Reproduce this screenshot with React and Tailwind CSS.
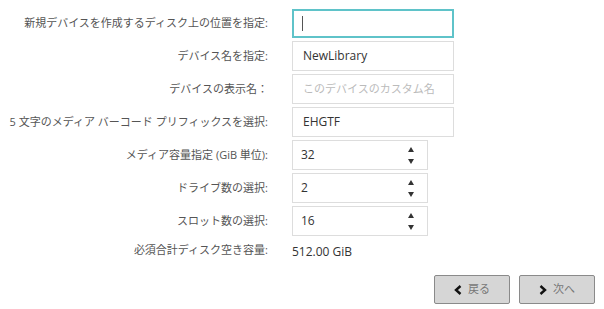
import { useState } from "react";

function Spinner() {
  return (
    <div className="flex flex-col items-center gap-[7px] mr-[13px]">
      <svg width="6" height="5" viewBox="0 0 6 5"><path d="M3 0L6 5H0z" fill="#333" /></svg>
      <svg width="6" height="5" viewBox="0 0 6 5"><path d="M0 0H6L3 5z" fill="#333" /></svg>
    </div>
  );
}

function Row({ label, children, h = "h-[30px]" }) {
  return (
    <div className={`flex items-center ${h}`}>
      <div className="w-[270px] text-right text-[11px] text-[#555] pr-[2px] whitespace-nowrap">{label}</div>
      <div className="ml-[22px]">{children}</div>
    </div>
  );
}

function TextBox({ value, placeholder }) {
  return (
    <div className="w-[162px] h-[30px] border border-[#ddd] bg-white flex items-center px-[10px]">
      {value ? (
        <span className="text-[12px] text-[#333]">{value}</span>
      ) : (
        <span className="text-[11px] text-[#bbb]">{placeholder}</span>
      )}
    </div>
  );
}

function NumBox({ value }) {
  return (
    <div className="w-[136px] h-[30px] border border-[#ddd] bg-white flex items-center justify-between pl-[8px]">
      <span className="text-[12px] text-[#333]">{value}</span>
      <Spinner />
    </div>
  );
}

function App() {
  const [step] = useState(1);

  return (
    <div
      className="w-[604px] h-[309px] bg-white relative"
      style={{ fontFamily: '"Open Sans", "Noto Sans CJK JP", sans-serif' }}
    >
      <div className="flex flex-col gap-[3px] pt-[8px]">
        <Row label="新規デバイスを作成するディスク上の位置を指定:">
          <div className="w-[162px] h-[29px] border-2 border-[#5fc3c9] bg-white flex items-center px-[8px]">
            <div className="w-[1px] h-[15px] bg-[#555]" />
          </div>
        </Row>
        <Row label="デバイス名を指定:">
          <TextBox value="NewLibrary" />
        </Row>
        <Row label="デバイスの表示名：">
          <TextBox placeholder="このデバイスのカスタム名" />
        </Row>
        <Row label="5 文字のメディア バーコード プリフィックスを選択:">
          <TextBox value="EHGTF" />
        </Row>
        <Row label="メディア容量指定 (GiB 単位):">
          <NumBox value="32" />
        </Row>
        <Row label="ドライブ数の選択:">
          <NumBox value="2" />
        </Row>
        <Row label="スロット数の選択:">
          <NumBox value="16" />
        </Row>
        <Row label="必須合計ディスク空き容量:" h="h-[22px]">
          <span className="text-[12px] text-[#333]">512.00 GiB</span>
        </Row>
      </div>

      <div className="flex justify-end gap-[9px] pr-[9px] mt-[14px]">
        <button className="w-[76px] h-[29px] bg-[#d6d6d6] border border-[#8a8a8a] rounded-[2px] flex items-center justify-center gap-[6px] text-[11px] text-[#777]">
          <svg width="8" height="10" viewBox="0 0 8 10"><path d="M6.5 1L2 5l4.5 4" fill="none" stroke="#111" strokeWidth="2.4" /></svg>
          戻る
        </button>
        <button className="w-[76px] h-[29px] bg-[#d6d6d6] border border-[#8a8a8a] rounded-[2px] flex items-center justify-center gap-[6px] text-[11px] text-[#777]">
          <svg width="8" height="10" viewBox="0 0 8 10"><path d="M1.5 1L6 5l-4.5 4" fill="none" stroke="#111" strokeWidth="2.4" /></svg>
          次へ
        </button>
      </div>
    </div>
  );
}

export default App;
